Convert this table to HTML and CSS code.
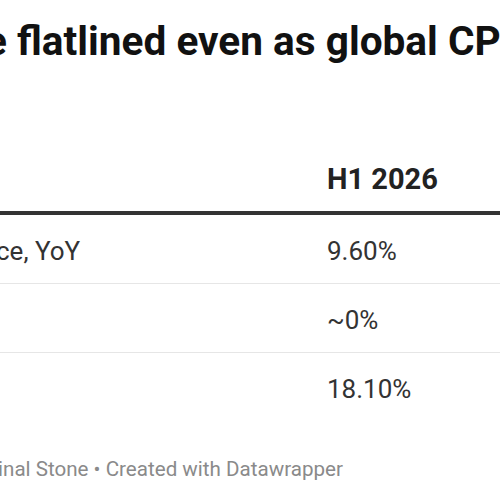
FILE: index.html
```html
<!DOCTYPE html>
<html lang="en">
<head>
<meta charset="utf-8">
<title>Datawrapper table</title>
<link rel="stylesheet" href="styles.css">
</head>
<body>
<div class="chart">
  <h1 class="title">e flatlined even as global CP</h1>
  <div class="table">
    <div class="row head">
      <div class="cell label"></div>
      <div class="cell value">H1 2026</div>
    </div>
    <div class="row">
      <div class="cell label first">ce, YoY</div>
      <div class="cell value">9.60%</div>
    </div>
    <div class="row">
      <div class="cell label"></div>
      <div class="cell value">~0%</div>
    </div>
    <div class="row last">
      <div class="cell label"></div>
      <div class="cell value">18.10%</div>
    </div>
  </div>
  <p class="footer">inal Stone • Created with Datawrapper</p>
</div>
</body>
</html>
```
FILE: styles.css
```css
html, body {
  margin: 0;
  padding: 0;
  background: #ffffff;
}
body {
  font-family: Roboto, "Liberation Sans", sans-serif;
  width: 500px;
  height: 500px;
  overflow: hidden;
}
.chart {
  padding-top: 17px;
}
.title {
  margin: 0 0 0 -15px;
  font-size: 40.6px;
  line-height: 48px;
  font-weight: 700;
  color: #111;
  white-space: nowrap;
}
.table {
  margin-top: 98px;
}
.row {
  display: grid;
  grid-template-columns: 327px 1fr;
  font-size: 26px;
  line-height: 32px;
  color: #333;
  padding: 20px 0 16px;
  border-bottom: 1px solid #e6e6e6;
  white-space: nowrap;
}
.row.head {
  padding: 0 0 16px;
  font-size: 29px;
  font-weight: 700;
  color: #222;
  border-bottom: 4px solid #333;
}
.row.last {
  border-bottom: none;
}
.label.first {
  margin-left: -4px;
}
.footer {
  margin: 36px 0 0 -2px;
  font-size: 20.6px;
  line-height: 24px;
  color: #8a8a8a;
  white-space: nowrap;
}
```
